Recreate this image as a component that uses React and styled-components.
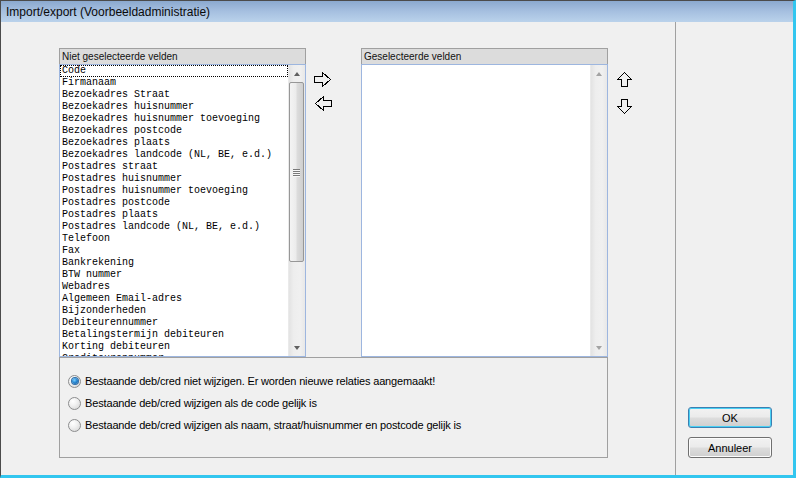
import React from "react"
import styled, { createGlobalStyle } from "styled-components"

const GlobalStyle = createGlobalStyle`
	html, body {
		margin: 0;
		padding: 0;
		background: #f0f0f0;
	}
	body {
		width: 796px;
		height: 478px;
		overflow: hidden;
	}
	* {
		box-sizing: border-box;
	}
`

const Window = styled.div`
	width: 796px;
	height: 478px;
	display: flex;
	flex-direction: column;
	background: #f0f0f0;
	border-top: 1px solid #4b4b4b;
	border-left: 1px solid #4b4b4b;
	border-right: 3px solid #32c6ef;
	border-bottom: 3px solid #32c6ef;
	font-family: "Liberation Sans", Arial, sans-serif;
	color: #000;
`

const TitleBar = styled.div`
	height: 21px;
	flex: none;
	display: flex;
	align-items: center;
	padding-left: 5px;
	background: linear-gradient(to bottom, #8ba9cf 0%, #a6c0e0 50%, #bad2eb 100%);
	font-size: 12px;
	color: #0a0a0a;
`

const Body = styled.div`
	flex: 1;
	display: flex;
	min-height: 0;
`

const Main = styled.div`
	width: 674px;
	flex: none;
	padding: 26px 0 0 58px;
	display: flex;
	flex-direction: column;
`

const SidePanel = styled.div`
	flex: 1;
	border-left: 1px solid #a0a0a0;
	display: flex;
	flex-direction: column;
	justify-content: flex-end;
	align-items: flex-start;
	gap: 9px;
	padding: 0 0 17px 12px;
`

const ListsRow = styled.div`
	display: flex;
	height: 309px;
`

const ListBox = styled.div`
	width: 247px;
	display: flex;
	flex-direction: column;
`

const ListHeader = styled.div`
	height: 16px;
	flex: none;
	background: #dcdcdc;
	border: 1px solid #a0a0a0;
	border-bottom: none;
	padding-left: 2px;
	font-size: 10px;
	line-height: 15px;
	color: #111;
`

const ListBody = styled.div`
	flex: 1;
	display: flex;
	border: 1px solid #9db6df;
	background: #fff;
	min-height: 0;
`

const Items = styled.div`
	flex: 1;
	overflow: hidden;
	font-family: "Liberation Mono", "Courier New", monospace;
	font-size: 10px;
`

const Item = styled.div`
	height: 12px;
	line-height: 12px;
	padding-left: 2px;
	white-space: nowrap;
	outline: ${p => (p.$focused ? "1px dotted #000" : "none")};
	outline-offset: -1px;
`

const ScrollBar = styled.div`
	width: 17px;
	flex: none;
	display: flex;
	flex-direction: column;
	background: linear-gradient(to right, #e3e3e3 0%, #eeeeee 30%, #f0f0f0 70%, #e8e8e8 100%);
	border-left: 1px solid #eaeaea;
`

const ScrollArrow = styled.div`
	height: 17px;
	flex: none;
	display: flex;
	align-items: center;
	justify-content: center;

	&::after {
		content: "";
		width: 0;
		height: 0;
		border-left: 3.5px solid transparent;
		border-right: 3.5px solid transparent;
		${p =>
			p.$down
				? `border-top: 4px solid ${p.$disabled ? "#a3a3a3" : "#606060"};`
				: `border-bottom: 4px solid ${p.$disabled ? "#a3a3a3" : "#606060"};`}
	}
`

const Thumb = styled.div`
	height: 180px;
	flex: none;
	margin: 0 1px 0 0;
	border: 1px solid #979797;
	border-radius: 2px;
	background: linear-gradient(to right, #f4f4f4 0%, #ececec 45%, #dcdcdc 55%, #cfcfcf 100%);
	display: flex;
	flex-direction: column;
	align-items: center;
	justify-content: center;
	gap: 1px;
`

const Grip = styled.div`
	width: 7px;
	height: 1px;
	background: #7a7a7a;
	box-shadow: 0 1px 0 #f8f8f8;
`

const Track = styled.div`
	flex: 1;
`

const MoveColumn = styled.div`
	width: ${p => p.$width}px;
	flex: none;
	display: flex;
	flex-direction: column;
	gap: ${p => p.$gap}px;
	padding: 24px 0 0 ${p => p.$left}px;
`

const ArrowIcon = styled.svg`
	display: block;
	shape-rendering: crispEdges;
`

const GroupBox = styled.div`
	width: 549px;
	height: 101px;
	border: 1px solid #a0a0a0;
	padding: 12px 0 0 8px;
	display: flex;
	flex-direction: column;
`

const RadioRow = styled.label`
	height: 22px;
	display: flex;
	align-items: center;
	gap: 4px;
	font-size: 11px;
	letter-spacing: -0.15px;
	color: #000;
`

const RadioCircle = styled.span`
	width: 13px;
	height: 13px;
	flex: none;
	border-radius: 50%;
	border: 1px solid #8c8d8e;
	background: radial-gradient(circle at 35% 30%, #ffffff 0%, #f1f1f1 40%, #d2d2d2 100%);
	display: flex;
	align-items: center;
	justify-content: center;

	&::after {
		content: "";
		display: ${p => (p.$checked ? "block" : "none")};
		width: 6px;
		height: 6px;
		border-radius: 50%;
		background: radial-gradient(circle at 40% 35%, #7fd0ff 0%, #2a8ad4 45%, #0c4f94 100%);
		box-shadow: 0 0 0 1px #2f6ea8;
	}
`

const Button = styled.button`
	width: 84px;
	height: 21px;
	padding: 0;
	border-radius: 3px;
	border: 1px solid ${p => (p.$default ? "#3c7fb1" : "#707070")};
	box-shadow: ${p => (p.$default ? "inset 0 0 0 1px #48d0f4" : "inset 0 0 0 1px #fcfcfc")};
	background: linear-gradient(to bottom, #f2f2f2 0%, #ebebeb 48%, #dddddd 52%, #cfcfcf 100%);
	font-family: "Liberation Sans", Arial, sans-serif;
	font-size: 11px;
	color: #000;
`

const RightArrow = ({ flip }) => (
	<ArrowIcon width="18" height="15" viewBox="0 0 18 15" style={flip ? { transform: "scaleX(-1)" } : undefined}>
		<polygon
			points="0.5,4.5 8.5,4.5 8.5,0.5 16.5,7.5 8.5,14.5 8.5,10.5 0.5,10.5"
			fill="none"
			stroke="#000"
			strokeWidth="1"
		/>
	</ArrowIcon>
)

const UpArrow = ({ flip }) => (
	<ArrowIcon width="16" height="16" viewBox="0 0 16 16" style={flip ? { transform: "scaleY(-1)" } : undefined}>
		<polygon
			points="7.5,0.5 14.5,7.5 10.5,7.5 10.5,14.5 4.5,14.5 4.5,7.5 0.5,7.5"
			fill="none"
			stroke="#000"
			strokeWidth="1"
		/>
	</ArrowIcon>
)

const velden = [
	"Code",
	"Firmanaam",
	"Bezoekadres Straat",
	"Bezoekadres huisnummer",
	"Bezoekadres huisnummer toevoeging",
	"Bezoekadres postcode",
	"Bezoekadres plaats",
	"Bezoekadres landcode (NL, BE, e.d.)",
	"Postadres straat",
	"Postadres huisnummer",
	"Postadres huisnummer toevoeging",
	"Postadres postcode",
	"Postadres plaats",
	"Postadres landcode (NL, BE, e.d.)",
	"Telefoon",
	"Fax",
	"Bankrekening",
	"BTW nummer",
	"Webadres",
	"Algemeen Email-adres",
	"Bijzonderheden",
	"Debiteurennummer",
	"Betalingstermijn debiteuren",
	"Korting debiteuren",
	"Crediteurennummer",
]

const opties = [
	"Bestaande deb/cred niet wijzigen. Er worden nieuwe relaties aangemaakt!",
	"Bestaande deb/cred wijzigen als de code gelijk is",
	"Bestaande deb/cred wijzigen als naam, straat/huisnummer en postcode gelijk is",
]

const App = () => {
	return (
		<>
			<GlobalStyle />
			<Window>
				<TitleBar>Import/export (Voorbeeldadministratie)</TitleBar>
				<Body>
					<Main>
						<ListsRow>
							<ListBox>
								<ListHeader>Niet geselecteerde velden</ListHeader>
								<ListBody>
									<Items>
										{velden.map((veld, i) => (
											<Item key={veld} $focused={i === 0}>
												{veld}
											</Item>
										))}
									</Items>
									<ScrollBar>
										<ScrollArrow />
										<Thumb>
											<Grip />
											<Grip />
											<Grip />
											<Grip />
										</Thumb>
										<Track />
										<ScrollArrow $down />
									</ScrollBar>
								</ListBody>
							</ListBox>
							<MoveColumn $width={55} $gap={9} $left={8}>
								<RightArrow />
								<RightArrow flip />
							</MoveColumn>
							<ListBox>
								<ListHeader>Geselecteerde velden</ListHeader>
								<ListBody>
									<Items />
									<ScrollBar>
										<ScrollArrow $disabled />
										<Track />
										<ScrollArrow $down $disabled />
									</ScrollBar>
								</ListBody>
							</ListBox>
							<MoveColumn $width={67} $gap={10} $left={9}>
								<UpArrow />
								<UpArrow flip />
							</MoveColumn>
						</ListsRow>
						<GroupBox>
							{opties.map((optie, i) => (
								<RadioRow key={optie}>
									<RadioCircle $checked={i === 0} />
									{optie}
								</RadioRow>
							))}
						</GroupBox>
					</Main>
					<SidePanel>
						<Button $default>OK</Button>
						<Button>Annuleer</Button>
					</SidePanel>
				</Body>
			</Window>
		</>
	)
}

export default App
